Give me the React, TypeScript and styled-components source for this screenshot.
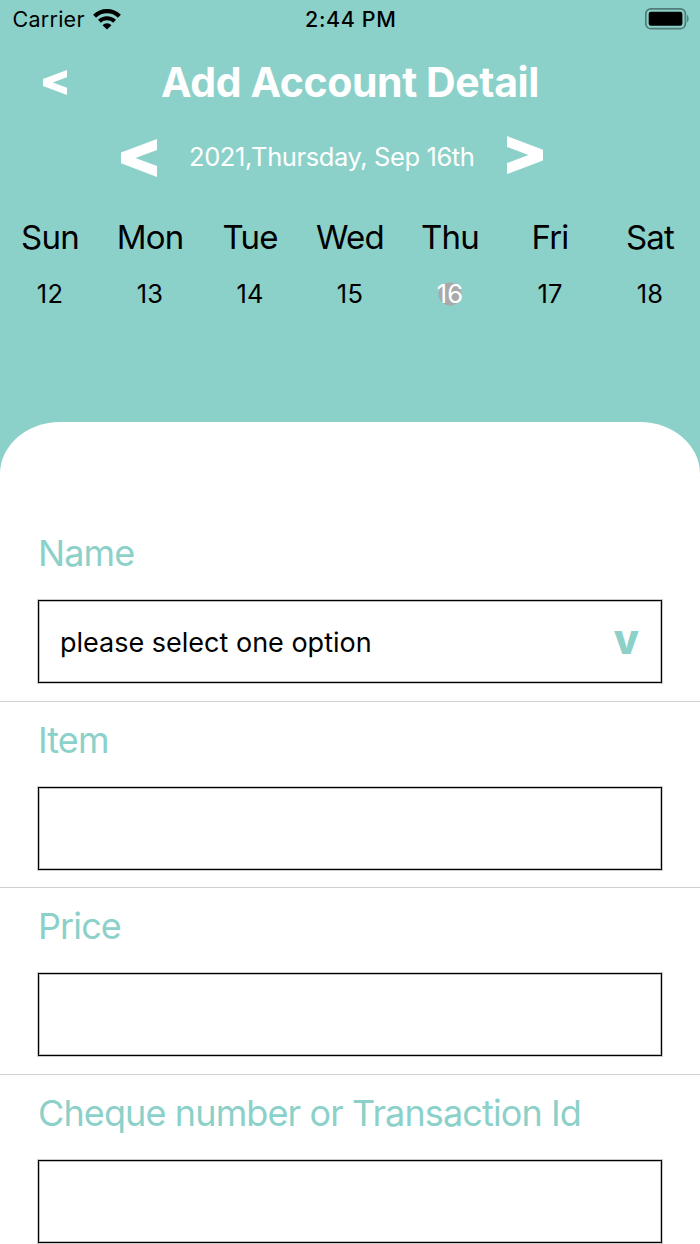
import React from "react";
import styled, { createGlobalStyle } from "styled-components";

const TEAL = "#8bd1c9";

const GlobalStyle = createGlobalStyle`
  * { box-sizing: border-box; }
  body { margin: 0; background: #fff; }
`;

const Screen = styled.div`
  width: 700px;
  height: 1244px;
  overflow: hidden;
  display: flex;
  flex-direction: column;
  background: ${TEAL};
  color: #000;
  font-family: Inter, "Liberation Sans", sans-serif;
  white-space: nowrap;
`;

const StatusBar = styled.div`
  height: 40px;
  flex: none;
  display: grid;
  grid-template-columns: 1fr auto 1fr;
  align-items: center;
  padding: 0 11px 2px 12.5px;
`;

const Carrier = styled.div`
  display: flex;
  align-items: center;
  gap: 8.5px;
  font-size: 21.5px;
  letter-spacing: 0.25px;
`;

const Clock = styled.div`
  font-size: 21.5px;
  font-weight: 500;
  letter-spacing: 0.6px;
`;

const BatterySlot = styled.div`
  display: flex;
  justify-content: flex-end;
`;

const TitleBar = styled.header`
  height: 84px;
  flex: none;
  display: grid;
  grid-template-columns: 110px 1fr 110px;
  align-items: center;
  justify-items: center;
  color: #fff;
`;

const Title = styled.h1`
  margin: 0;
  font-size: 41px;
  line-height: 50px;
  font-weight: 700;
  letter-spacing: -0.4px;
`;

const DateNav = styled.div`
  height: 64px;
  flex: none;
  display: flex;
  justify-content: space-between;
  align-items: center;
  padding: 0 157px 0 120.5px;
  color: #fff;
`;

const DateText = styled.span`
  margin-top: 2px;
  font-size: 25.5px;
  line-height: 32px;
  letter-spacing: -0.4px;
`;

const ArrowButton = styled.button<{ $drop?: number }>`
  border: 0;
  padding: 0;
  margin-top: ${(p) => p.$drop ?? 0}px;
  background: none;
  color: inherit;
  display: flex;
`;

const Week = styled.div`
  height: 234px;
  flex: none;
  display: grid;
  grid-template-columns: repeat(7, 1fr);
  padding-top: 28px;
`;

const Day = styled.div`
  display: flex;
  flex-direction: column;
  align-items: center;
`;

const DayName = styled.span`
  font-size: 33px;
  line-height: 42px;
  letter-spacing: -0.8px;
`;

const DayNumber = styled.span<{ $selected: boolean }>`
  margin-top: 20px;
  font-size: 25.5px;
  line-height: 32px;
  letter-spacing: 0.2px;
  color: ${(p) => (p.$selected ? "#fff" : "#000")};
  background: ${(p) =>
    p.$selected ? "radial-gradient(circle at 50% 50%, #a9a9a9 11.2px, transparent 11.9px)" : "none"};
`;

const Sheet = styled.main`
  flex: 1;
  background: #fff;
  border-radius: 60px 60px 0 0 / 52px 52px 0 0;
  padding-top: 93px;
`;

const Field = styled.section`
  height: 186.6px;
  padding: 17px 38px 0;
  border-bottom: 1px solid #d0d0d0;
`;

const Label = styled.label`
  display: block;
  height: 68px;
  font-size: 36px;
  line-height: 43px;
  letter-spacing: -0.88px;
  color: ${TEAL};
`;

const Box = styled.div`
  height: 83px;
  border: 1px solid #000;
  box-shadow: 0 0 0 1px rgba(0, 0, 0, 0.2), inset 0 0 0 1px rgba(0, 0, 0, 0.25);
  display: flex;
  align-items: center;
  justify-content: space-between;
  padding: 1px 22px 0 21px;
  font-size: 27px;
`;

const Caret = styled.span`
  font-size: 41px;
  line-height: 48px;
  font-weight: 800;
  color: ${TEAL};
  margin-top: -6px;
`;

const Arrow = ({ width, height, flip }: { width: number; height: number; flip?: boolean }) => (
  <svg width={width} height={height} viewBox="0 0 36 38" preserveAspectRatio="none">
    <path
      d="M36 0V11L14.5 19L36 27V38L0 24.3V13.5Z"
      fill="currentColor"
      transform={flip ? "rotate(180 18 19)" : undefined}
    />
  </svg>
);

const Wifi = () => (
  <svg width="28" height="21" viewBox="0 0 28 21" fill="none" stroke="#000">
    <path d="M1.6 7.2A17.8 17.8 0 0 1 26.4 7.2" strokeWidth="4.3" />
    <path d="M6.4 12.2A11 11 0 0 1 21.6 12.2" strokeWidth="4" />
    <path d="M14 20.5L9.5 16.2A6.4 6.4 0 0 1 18.5 16.2Z" fill="#000" stroke="none" />
  </svg>
);

const Battery = () => (
  <svg width="44" height="22" viewBox="0 0 44 22">
    <rect x="0.8" y="0.9" width="39.6" height="19.8" rx="5" fill="none" stroke="#527c77" strokeWidth="1.7" />
    <rect x="3.7" y="3.8" width="33.7" height="14" rx="2.2" fill="#000" />
    <path d="M42.4 7.5Q44.2 10.7 42.4 14Z" fill="#527c77" stroke="#527c77" strokeWidth="0.7" />
  </svg>
);

const days = [
  ["Sun", 12],
  ["Mon", 13],
  ["Tue", 14],
  ["Wed", 15],
  ["Thu", 16],
  ["Fri", 17],
  ["Sat", 18],
] as const;

const inputs = ["Item", "Price", "Cheque number or Transaction Id"];

export default function App() {
  return (
    <Screen>
      <GlobalStyle />
      <StatusBar>
        <Carrier>
          Carrier
          <Wifi />
        </Carrier>
        <Clock>2:44 PM</Clock>
        <BatterySlot>
          <Battery />
        </BatterySlot>
      </StatusBar>
      <TitleBar>
        <ArrowButton aria-label="Back">
          <Arrow width={24} height={25} />
        </ArrowButton>
        <Title>Add Account Detail</Title>
      </TitleBar>
      <DateNav>
        <ArrowButton aria-label="Previous day" $drop={3}>
          <Arrow width={36} height={38} />
        </ArrowButton>
        <DateText>2021,Thursday, Sep 16th</DateText>
        <ArrowButton aria-label="Next day" $drop={-3}>
          <Arrow width={36} height={38} flip />
        </ArrowButton>
      </DateNav>
      <Week>
        {days.map(([name, date]) => (
          <Day key={name}>
            <DayName>{name}</DayName>
            <DayNumber $selected={date === 16}>{date}</DayNumber>
          </Day>
        ))}
      </Week>
      <Sheet>
        <Field>
          <Label>Name</Label>
          <Box>
            <span>please select one option</span>
            <Caret>v</Caret>
          </Box>
        </Field>
        {inputs.map((label) => (
          <Field key={label}>
            <Label>{label}</Label>
            <Box />
          </Field>
        ))}
      </Sheet>
    </Screen>
  );
}
